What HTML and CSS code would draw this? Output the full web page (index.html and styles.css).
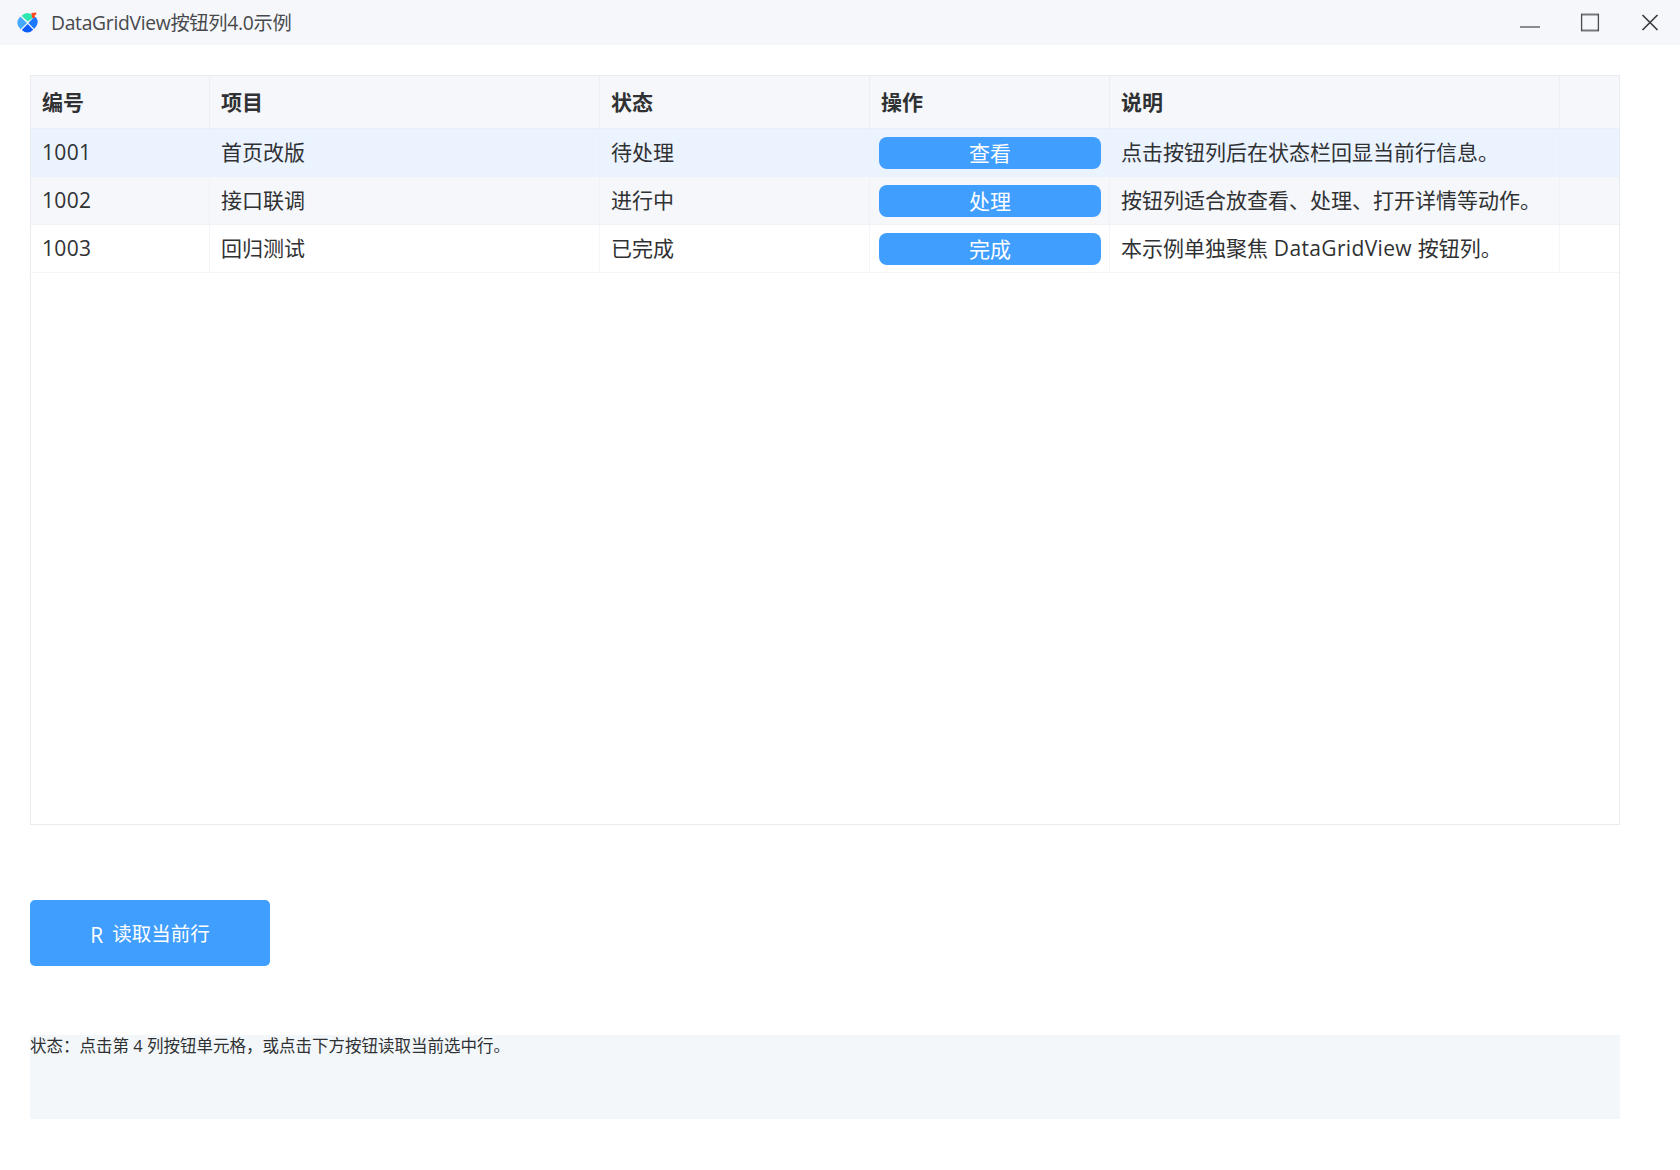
FILE: index.html
```html
<!DOCTYPE html>
<html lang="zh-CN">
<head>
    <meta charset="UTF-8">
    <meta name="viewport" content="width=device-width, initial-scale=1.0">
    <title>DataGridView按钮列4.0示例</title>
    <link rel="stylesheet" href="styles.css">
</head>
<body>
    <header class="titlebar">
        <svg class="logo" width="22" height="22" viewBox="0 0 22 22">
            <path d="M4.5 3.8Q10.5-1.8 16 3.8V6L10.7 9.5Z" fill="#2ee6b0"/>
            <path d="M3.3 4.6L10 11L3.6 17.2Q-2.8 11 3.3 4.6Z" fill="#45aaff"/>
            <path d="M17.4 4.8L11.4 11L17.3 17Q23 11 19.2 5.5Z" fill="#1c78ff"/>
            <path d="M10.7 11.9L16.2 17.7Q10.6 23.4 4.8 17.9Z" fill="#0a5cff"/>
            <path d="M14.3 1L19.2 .6V3H17.8V6H15.2Z" fill="#ff4a24"/>
        </svg>
        <h1 class="title">DataGridView按钮列4.0示例</h1>
        <div class="window-controls">
            <svg width="60" height="45" viewBox="0 0 60 45"><path d="M20 27H40" stroke="#8b8c90" stroke-width="2"/></svg>
            <svg width="60" height="45" viewBox="0 0 60 45"><path d="M21 14.5H39M21 30.5H39" stroke="#77787c" stroke-width="1.8"/><path d="M21.6 14V31M38.4 14V31" stroke="#48494c" stroke-width="1.3"/></svg>
            <svg width="60" height="45" viewBox="0 0 60 45"><path d="M22.5 15L37.5 30M37.5 15L22.5 30" stroke="#3c3d40" stroke-width="1.7"/></svg>
        </div>
    </header>
    <main class="content">
        <div class="grid">
            <table class="grid-table">
                <colgroup>
                    <col class="col-id">
                    <col class="col-item">
                    <col class="col-status">
                    <col class="col-action">
                    <col class="col-note">
                    <col>
                </colgroup>
                <thead>
                    <tr><th>编号</th><th>项目</th><th>状态</th><th>操作</th><th>说明</th><th></th></tr>
                </thead>
                <tbody>
                    <tr class="selected">
                        <td><span class="latin">1001</span></td><td>首页改版</td><td>待处理</td>
                        <td class="action"><button class="cell-button">查看</button></td>
                        <td>点击按钮列后在状态栏回显当前行信息。</td><td></td>
                    </tr>
                    <tr class="striped">
                        <td><span class="latin">1002</span></td><td>接口联调</td><td>进行中</td>
                        <td class="action"><button class="cell-button">处理</button></td>
                        <td>按钮列适合放查看、处理、打开详情等动作。</td><td></td>
                    </tr>
                    <tr>
                        <td><span class="latin">1003</span></td><td>回归测试</td><td>已完成</td>
                        <td class="action"><button class="cell-button">完成</button></td>
                        <td>本示例单独聚焦<span class="latin"> DataGridView </span>按钮列。</td><td></td>
                    </tr>
                </tbody>
            </table>
        </div>
        <button class="read-button"><span class="button-icon">R</span><span class="button-text">读取当前行</span></button>
        <div class="status">状态：点击第 4 列按钮单元格，或点击下方按钮读取当前选中行。</div>
    </main>
</body>
</html>
```
FILE: styles.css
```css
* {
    box-sizing: border-box;
}
body {
    margin: 0;
    background: #fff;
    color: #303133;
    font-family: "Open Sans", "Noto Sans CJK SC", sans-serif;
}
button {
    font-family: inherit;
    border: none;
    padding: 0;
    color: #fff;
    background: #409eff;
    cursor: pointer;
}
.titlebar {
    height: 45px;
    padding-left: 17px;
    display: flex;
    align-items: center;
    background: #f5f7fb;
}
.title {
    flex: 1;
    margin: 0 0 0 12px;
    font-size: 19.3px;
    font-weight: normal;
    line-height: 45px;
    letter-spacing: -0.3px;
    color: #48494c;
}
.window-controls {
    display: flex;
}
.content {
    padding: 30px 60px 0 30px;
}
.grid {
    height: 750px;
    border: 1px solid #e8ebf0;
}
.grid-table {
    width: 100%;
    table-layout: fixed;
    border-collapse: separate;
    border-spacing: 0;
    font-size: 21px;
    line-height: 30px;
}
.col-id {
    width: 179px;
}
.col-item {
    width: 390px;
}
.col-status {
    width: 270px;
}
.col-action {
    width: 240px;
}
.col-note {
    width: 450px;
}
th,
td {
    padding: 0 0 1px 11px;
    text-align: left;
    white-space: nowrap;
    border-right: 1px solid #f2f5f9;
    border-bottom: 1px solid #f2f5f9;
}
th {
    height: 53px;
    background: #f5f7fa;
    border-color: #ebeef5;
}
td {
    height: 48px;
}
th:last-child,
td:last-child {
    border-right: none;
}
.selected td {
    background: #ebf3ff;
    border-color: #e8f1fc;
}
.striped td {
    background: #f5f7fa;
    border-color: #eff3f8;
}
.latin {
    letter-spacing: 0.35px;
}
td.action {
    padding: 1px 8px 0 9px;
}
.cell-button {
    display: block;
    width: 222px;
    height: 32px;
    border-radius: 8px;
    font-size: 21px;
    line-height: 32px;
}
.read-button {
    display: flex;
    align-items: center;
    justify-content: center;
    gap: 9px;
    width: 240px;
    height: 66px;
    margin-top: 75px;
    border-radius: 5px;
    font-size: 19.5px;
}
.button-icon {
    font-size: 21px;
    padding-top: 3px;
}
.button-text {
    padding-bottom: 2px;
}
.status {
    height: 84px;
    margin-top: 69px;
    background: #f3f7fa;
    font-size: 16.5px;
    line-height: 22px;
}
```
